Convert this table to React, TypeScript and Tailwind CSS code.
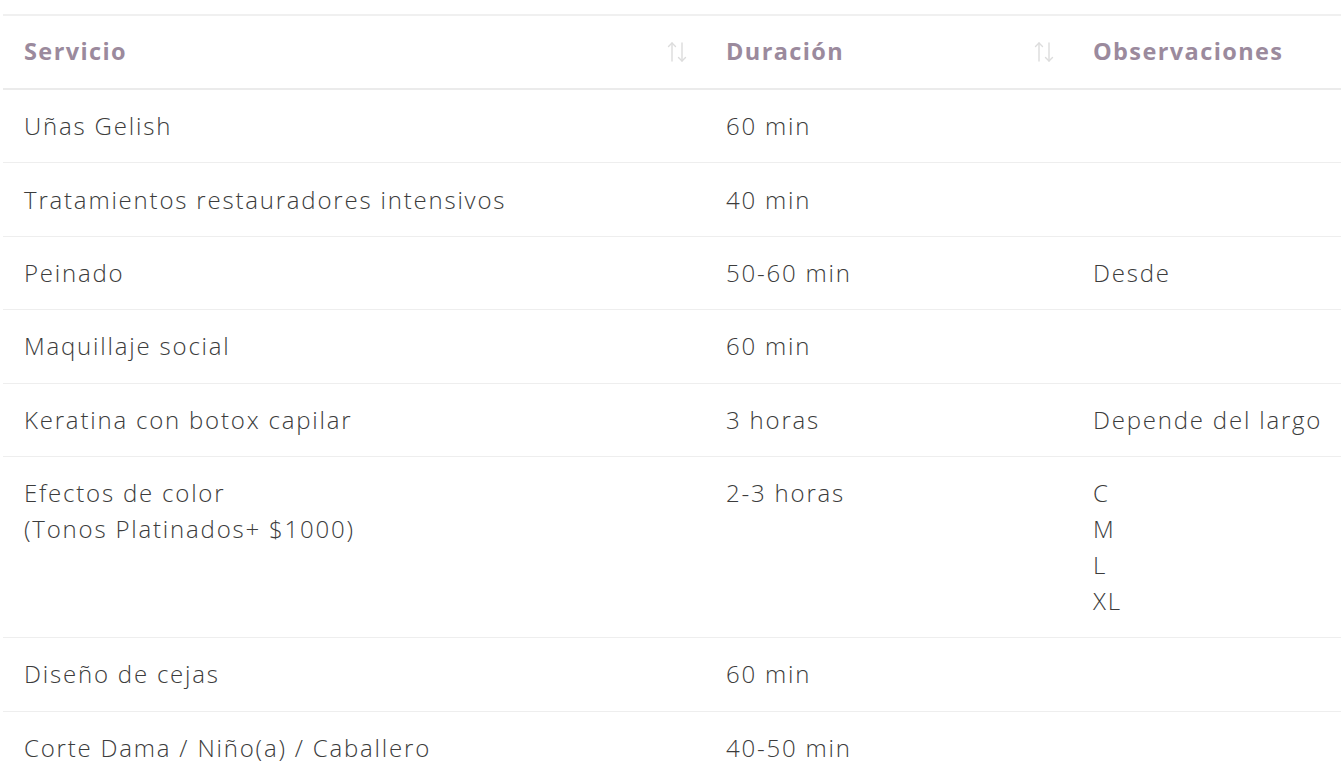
import React from "react";

const rows: { s: string[]; d: string; o: string[] }[] = [
  { s: ["Uñas Gelish"], d: "60 min", o: [] },
  { s: ["Tratamientos restauradores intensivos"], d: "40 min", o: [] },
  { s: ["Peinado"], d: "50-60 min", o: ["Desde"] },
  { s: ["Maquillaje social"], d: "60 min", o: [] },
  { s: ["Keratina con botox capilar"], d: "3 horas", o: ["Depende del largo"] },
  { s: ["Efectos de color", "(Tonos Platinados+ $1000)"], d: "2-3 horas", o: ["C", "M", "L", "XL"] },
  { s: ["Diseño de cejas"], d: "60 min", o: [] },
  { s: ["Corte Dama / Niño(a) / Caballero"], d: "40-50 min", o: [] },
];

function SortIcon() {
  return (
    <svg width="26" height="22" viewBox="0 0 26 22" fill="none" stroke="#dcdcdc" strokeWidth="1.4" strokeLinecap="round" strokeLinejoin="round">
      <path d="M8 2 V20" />
      <path d="M4.5 5.5 L8 2 L11.5 5.5" />
      <path d="M18 2 V20" />
      <path d="M14.5 16.5 L18 20 L21.5 16.5" />
    </svg>
  );
}

export default function App() {
  return (
    <div className="w-[1341px] h-[770px] overflow-hidden bg-white" style={{ fontFamily: "'Open Sans', Lato, sans-serif" }}>
      <div className="pt-[14px] pl-[3px]">
        <div className="w-[1338px] border-t-2 border-[#f0f0f0]">
          <div className="grid grid-cols-[702px_367px_269px] border-b-2 border-[#ebebeb] h-[74px] items-center text-[23.5px] tracking-[1.4px] font-bold text-[#9b8a9d]">
            <div className="flex items-center justify-between pl-[21px] pr-[15px]">
              <span>Servicio</span>
              <SortIcon />
            </div>
            <div className="flex items-center justify-between pl-[21px] pr-[15px]">
              <span>Duración</span>
              <SortIcon />
            </div>
            <div className="pl-[21px] whitespace-nowrap">Observaciones</div>
          </div>
          {rows.map((r, i) => (
            <div key={i} className="grid grid-cols-[702px_367px_269px] border-b border-[#eeeeee] py-[18.2px] text-[24px] leading-[36px] tracking-[1.8px] font-light text-[#3c3c3c]">
              <div className="pl-[21px]">
                {r.s.map((t, j) => (
                  <div key={j}>{t}</div>
                ))}
              </div>
              <div className="pl-[21px]">{r.d}</div>
              <div className="pl-[21px] whitespace-nowrap">
                {r.o.map((t, j) => (
                  <div key={j}>{t}</div>
                ))}
              </div>
            </div>
          ))}
        </div>
      </div>
    </div>
  );
}
